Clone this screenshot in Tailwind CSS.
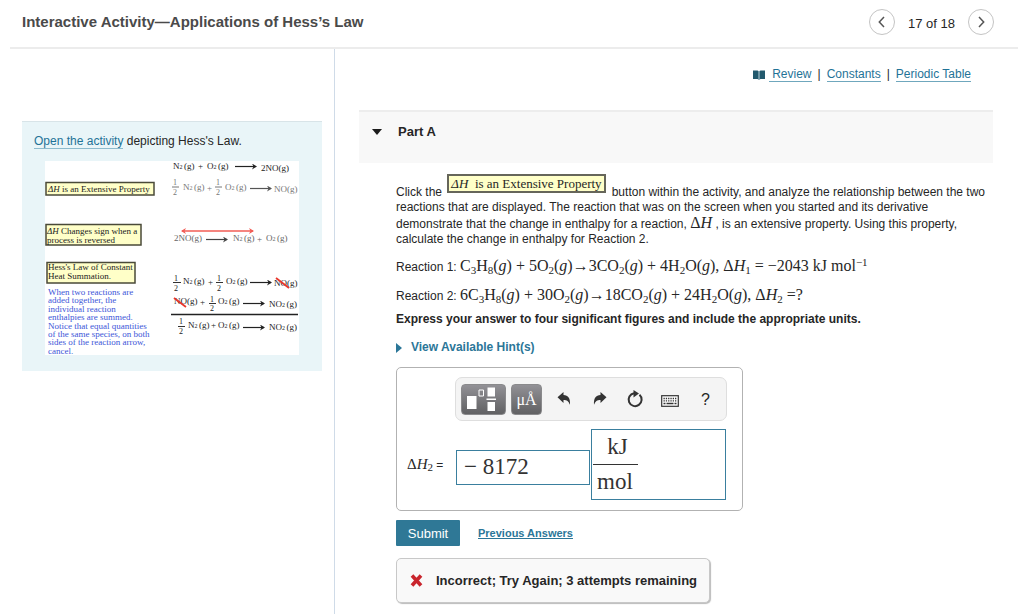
<!DOCTYPE html>
<html lang="en">
<head>
  <meta charset="UTF-8" />
  <title>Interactive Activity—Applications of Hess’s Law</title>
  <meta name="viewport" content="width=device-width, initial-scale=1" />
  <script src="https://cdn.jsdelivr.net/npm/@tailwindcss/browser@4"></script>
</head>
<body class="min-h-screen flex flex-col bg-white font-['Liberation_Sans',Arial,sans-serif] text-[12px] leading-[15px] text-[#262626]">

  <!-- Header -->
  <header class="ml-[10px] mr-[6px] h-[49px] pl-3 pr-6 pb-1 flex items-center justify-between border-b-2 border-[#ececec]">
    <h1 class="text-[15px] font-bold text-[#4a4a4a]">Interactive Activity—Applications of Hess’s Law</h1>
    <nav class="flex items-center gap-[13px] text-[13px]">
      <button aria-label="Previous item" class="size-[26px] rounded-full border border-[#c4c4c4] flex items-center justify-center">
        <svg class="size-3" viewBox="0 0 12 12" fill="none" stroke="#555" stroke-width="1.5"><path d="M8 1 3.3 6 8 11" /></svg>
      </button>
      <span class="pt-1">17 of 18</span>
      <button aria-label="Next item" class="size-[26px] rounded-full border border-[#c4c4c4] flex items-center justify-center">
        <svg class="size-3" viewBox="0 0 12 12" fill="none" stroke="#555" stroke-width="1.5"><path d="M4 1 8.7 6 4 11" /></svg>
      </button>
    </nav>
  </header>

  <div class="flex-1 grid grid-cols-[335px_1fr]">

    <!-- Activity panel -->
    <aside class="border-r border-[#cfdbe8] pl-[22px] pr-3 pt-[72px]">
      <div class="bg-[#e9f5f8] border-t border-[#d8e4e8] px-3 pt-3 pb-4">
        <p><a href="#" class="text-[#1f7397] border-b border-[#8dbbcd]">Open the activity</a> depicting Hess's Law.</p>

        <svg class="mt-3 ml-[11px] w-[254px] h-[194px] bg-white" viewBox="45 160 254 194" font-family="Liberation Serif, serif" font-size="9" fill="#222">
          <defs>
            <marker id="head" viewBox="0 0 6 6" refX="5" refY="3" markerWidth="6" markerHeight="6" markerUnits="userSpaceOnUse" orient="auto-start-reverse"><path d="M1 0 6 3 1 6 2.500 3z" fill="context-stroke" /></marker>
          </defs>
          <g fill="#ffffc8" stroke="#4a4a38" stroke-width="1.500">
            <rect x="46" y="181.500" width="108" height="12.500" />
            <rect x="46" y="223.500" width="95" height="20.500" />
            <rect x="47" y="261.500" width="88" height="20.500" />
          </g>
          <text x="48" y="191"><tspan font-style="italic">ΔH</tspan> is an Extensive Property</text>
          <text x="47" y="233"><tspan font-style="italic">ΔH</tspan> Changes sign when a</text>
          <text x="47" y="242">process is reversed</text>
          <text x="48" y="269">Hess's Law of Constant</text>
          <text x="48" y="278">Heat Summation.</text>

          <g fill="#3c55d8">
            <text x="48" y="294">When two reactions are</text>
            <text x="48" y="302">added together, the</text>
            <text x="48" y="311">individual reaction</text>
            <text x="48" y="319">enthalpies are summed.</text>
            <text x="48" y="328">Notice that equal quantities</text>
            <text x="48" y="336">of the same species, on both</text>
            <text x="48" y="344">sides of the reaction arrow,</text>
            <text x="48" y="353">cancel.</text>
          </g>

          <!-- extensive property -->
          <text x="173" y="167.500">N<tspan font-size="6">2 </tspan>(g)</text><text x="198" y="168">+</text><text x="207" y="167.500">O<tspan font-size="6">2 </tspan>(g)</text><text x="261" y="170">2NO(g)</text>
          <g fill="#777">
            <text x="173" y="184" font-size="8">1</text><text x="173" y="194" font-size="8">2</text>
            <text x="183" y="189">N<tspan font-size="6">2 </tspan>(g)</text><text x="207" y="190">+</text>
            <text x="216" y="184" font-size="8">1</text><text x="216" y="194" font-size="8">2</text>
            <text x="225" y="189">O<tspan font-size="6">2 </tspan>(g)</text><text x="274" y="191">NO(g)</text>
          </g>
          <path d="M172 186h7M215 186h7" stroke="#777" />

          <!-- reversed -->
          <g fill="#666"><text x="174" y="240">2NO(g)</text><text x="233" y="240">N<tspan font-size="6">2 </tspan>(g)</text><text x="257" y="241">+</text><text x="266" y="240">O<tspan font-size="6">2 </tspan>(g)</text></g>
          <path d="M182 230H253" stroke="#f25c55" stroke-width="1.500" marker-start="url(#head)" marker-end="url(#head)" />

          <!-- summation -->
          <text x="174" y="280" font-size="8">1</text><text x="174" y="290" font-size="8">2</text><text x="183" y="283">N<tspan font-size="6">2 </tspan>(g)</text><text x="208" y="284">+</text>
          <text x="217" y="280" font-size="8">1</text><text x="217" y="290" font-size="8">2</text><text x="226" y="283">O<tspan font-size="6">2 </tspan>(g)</text><text x="274" y="285">NO(g)</text>
          <text x="174" y="303">NO(g)</text><text x="200" y="304">+</text><text x="210" y="301" font-size="8">1</text><text x="210" y="310" font-size="8">2</text><text x="218" y="303">O<tspan font-size="6">2 </tspan>(g)</text><text x="269" y="306">NO<tspan font-size="6">2 </tspan>(g)</text>
          <text x="179" y="323" font-size="8">1</text><text x="179" y="333" font-size="8">2</text><text x="188" y="327">N<tspan font-size="6">2 </tspan>(g)</text><text x="211" y="327">+</text><text x="218" y="327">O<tspan font-size="6">2 </tspan>(g)</text><text x="269" y="329">NO<tspan font-size="6">2 </tspan>(g)</text>
          <path d="M173 281.500h8M216 281.500h7M209 302.500h7M178 325.500h7" stroke="#333" />
          <path d="M171 313.500H298" stroke="#222" stroke-width="1.500" />
          <path d="M276 277 289 287M174 297 186 306" stroke="#e8372c" stroke-width="1.800" />

          <g stroke="#222" stroke-width="1.200">
            <path d="M235 165.500H256" marker-end="url(#head)" />
            <path d="M250 187.500H271" stroke="#555" marker-end="url(#head)" />
            <path d="M206 238.500H227" stroke="#444" marker-end="url(#head)" />
            <path d="M250 281.500H271" marker-end="url(#head)" />
            <path d="M243 302.500H264" marker-end="url(#head)" />
            <path d="M243 326.500H264" marker-end="url(#head)" />
          </g>
        </svg>
      </div>
    </aside>

    <main class="pl-6 pr-[31px] pt-[18px]">
      <nav class="flex justify-end items-center gap-[6px] pr-[22px] text-[#1f7397]">
        <svg class="w-3 h-[10px]" viewBox="0 0 12 10"><path d="M0 .5h4.500L6 1.200 7.500.500H12V9H7.500L6 9.800 4.500 9H0z" fill="#22596d" /><path d="M6 1V9.500" stroke="#b9d3db" /></svg>
        <a href="#" class="border-b border-[#6fa7bd] leading-[13px] whitespace-pre -ml-[2px]"> Review</a>
        <span class="text-[#262626]">|</span>
        <a href="#" class="border-b border-[#6fa7bd] leading-[13px]">Constants</a>
        <span class="text-[#262626]">|</span>
        <a href="#" class="border-b border-[#6fa7bd] leading-[13px]">Periodic Table</a>
      </nav>

      <!-- Part header -->
      <button class="mt-7 w-full h-[53px] bg-[#f8f8f8] border-t-2 border-[#ededed] px-[13px] pb-3 flex items-center gap-4 text-[13px] font-bold">
        <svg class="w-[10px] h-[6px]" viewBox="0 0 10 6"><path d="M0 0h10L5 6z" fill="#1c1c1c" /></svg>
        Part A
      </button>

      <div class="pl-[37px] pt-[11px]">
        <p>Click the <span class="inline-block overflow-hidden h-[19px] w-[159px] mb-[3px] mx-[2px] pl-[2px] border-2 border-[#66665a] bg-[#ffffc8] text-[13px] leading-[16px] font-['Liberation_Serif',serif]"><i>ΔH</i>&nbsp; is an Extensive Property</span> button within the activity, and analyze the relationship between the two reactions that are displayed. The reaction that was on the screen when you started and its derivative demonstrate that the change in enthalpy for a reaction, <span class="text-[16px] leading-none font-['Liberation_Serif',serif]">Δ<i>H</i></span> , is an extensive property. Using this property, calculate the change in enthalpy for Reaction 2.</p>

        <p class="mt-2 h-[21px] leading-[21px] whitespace-nowrap">Reaction 1: <span class="text-[16px] font-['Liberation_Serif',serif]">C<sub class="text-[11px]">3</sub>H<sub class="text-[11px]">8</sub>(<i>g</i>) + 5O<sub class="text-[11px]">2</sub>(<i>g</i>)→3CO<sub class="text-[11px]">2</sub>(<i>g</i>) + 4H<sub class="text-[11px]">2</sub>O(<i>g</i>), Δ<i>H</i><sub class="text-[11px]">1</sub> = −2043 kJ mol<sup class="text-[11px]">−1</sup></span></p>
        <p class="mt-2 h-[21px] leading-[21px] whitespace-nowrap">Reaction 2: <span class="text-[16px] font-['Liberation_Serif',serif]">6C<sub class="text-[11px]">3</sub>H<sub class="text-[11px]">8</sub>(<i>g</i>) + 30O<sub class="text-[11px]">2</sub>(<i>g</i>)→18CO<sub class="text-[11px]">2</sub>(<i>g</i>) + 24H<sub class="text-[11px]">2</sub>O(<i>g</i>), Δ<i>H</i><sub class="text-[11px]">2</sub> =?</span></p>
        <p class="mt-[7px] font-bold">Express your answer to four significant figures and include the appropriate units.</p>

        <button class="mt-[13px] flex items-center gap-[9px] font-bold text-[#2b7698]">
          <svg class="w-[6px] h-[10px]" viewBox="0 0 6 10"><path d="M0 0 6 5 0 10z" fill="#2b7698" /></svg>
          View Available Hint(s)
        </button>

        <!-- Answer entry -->
        <form class="mt-3">
          <div class="w-[347px] h-[144px] pt-[9px] border border-[#b2b2b2] rounded-[5px]">
            <div class="ml-[58px] w-[272px] h-11 pl-[5px] flex items-center bg-[#f4f4f4] border border-[#dedede] rounded-[7px]">
              <button type="button" aria-label="Templates" class="w-[45px] h-[31px] rounded-[4px] bg-linear-to-b from-[#929196] to-[#616163] border border-[#8a8a8c] flex items-center justify-center">
                <svg class="w-[45px] h-[31px] shrink-0" viewBox="0 0 45 31" fill="#fff"><path d="M6 12h9.500v13H6zM26.500 3.500h7.500v9h-7.500zM26.500 18h7.500v9h-7.500zM25.500 14.500h9.500v1.500h-9.500z" /><path d="M18 6h4.500v6H18z" fill="none" stroke="#fff" /></svg>
              </button>
              <button type="button" aria-label="Units" class="ml-[5px] w-[31px] h-[31px] rounded-[4px] bg-linear-to-b from-[#929196] to-[#616163] border border-[#8a8a8c] text-white text-[16px] font-['Liberation_Serif',serif]">μÅ</button>
              <button type="button" aria-label="Undo" class="ml-[14px]">
                <svg class="size-4" viewBox="0 0 16 16"><path d="M1.500 6.300 7.500 1v3c4.700.200 6.900 3.100 6.500 9.800-1.400-3.700-3-4.900-6.500-4.900v3z" fill="#333" /></svg>
              </button>
              <button type="button" aria-label="Redo" class="ml-5">
                <svg class="size-4" viewBox="0 0 16 16"><path d="M14.500 6.300 8.500 1v3C3.800 4.200 1.600 7.100 2 13.800c1.400-3.700 3-4.900 6.500-4.900v3z" fill="#333" /></svg>
              </button>
              <button type="button" aria-label="Reset" class="ml-[18px]">
                <svg class="size-[18px]" viewBox="0 0 18 18"><path d="M13.500 4.800A6.500 6.500 0 1 1 8 3.200" fill="none" stroke="#333" stroke-width="2" /><path d="M7.500 0 13 3.600 7.500 7.500z" fill="#333" /></svg>
              </button>
              <button type="button" aria-label="Keyboard shortcuts" class="ml-[17px] pt-1">
                <svg class="w-[18px] h-[12px]" viewBox="0 0 18 12"><rect x=".7" y=".7" width="16.600" height="10.600" fill="#fff" stroke="#333" stroke-width="1.200" /><path d="M2.500 3.500h13M2.500 5.800h13" stroke="#333" stroke-width="1.300" stroke-dasharray="1.300 1" /><path d="M2.500 8.500h2M5.500 8.500h7M13.500 8.500h2" stroke="#333" stroke-width="1.300" /></svg>
              </button>
              <button type="button" aria-label="Help" class="ml-[22px] text-[16px]">?</button>
            </div>

            <div class="mt-2 pl-[10px] flex items-center">
              <label for="value" class="w-[49px] whitespace-nowrap"><span class="text-[15px] leading-[15px] font-['Liberation_Serif',serif]">Δ<i>H</i><sub class="text-[11px]">2</sub></span> =</label>
              <input id="value" type="text" value="− 8172" class="w-[134px] h-[35px] mt-[5px] px-[7px] border border-[#3a7f9e] text-[23px] font-['Liberation_Serif',serif] text-[#333]" />
              <div class="ml-[1px] w-[135px] h-[71px] pl-[1px] border border-[#3a7f9e] text-[23px] font-['Liberation_Serif',serif] text-[#333]">
                <input aria-label="Unit numerator" type="text" value="kJ" class="block w-[45px] h-[35px] pl-1 text-center border-b border-[#333]" />
                <input aria-label="Unit denominator" type="text" value="mol" class="block w-[45px] h-[34px] pl-1" />
              </div>
            </div>
          </div>

          <div class="mt-[9px] flex items-center gap-[18px]">
            <button type="submit" class="w-16 h-[26px] rounded-[1px] bg-[#2f7896] text-white text-[13px]">Submit</button>
            <a href="#" class="text-[11px] font-bold text-[#2b7698] underline">Previous Answers</a>
          </div>
        </form>

        <div role="status" class="mt-3 w-[314px] h-[45px] pl-[13px] flex items-center gap-[13px] bg-[#f9f9f9] border border-[#c8c8c8] rounded-[5px] shadow-[1px_1px_1px_#bbb] font-bold text-[13px] whitespace-nowrap">
          <svg class="size-[13px]" viewBox="0 0 13 13"><path d="M2 1.500 11 11.500M11 1.500 2 11.500" stroke="#c9252d" stroke-width="3.600" /></svg>
          Incorrect; Try Again; 3 attempts remaining
        </div>
      </div>
    </main>
  </div>

</body>
</html>
